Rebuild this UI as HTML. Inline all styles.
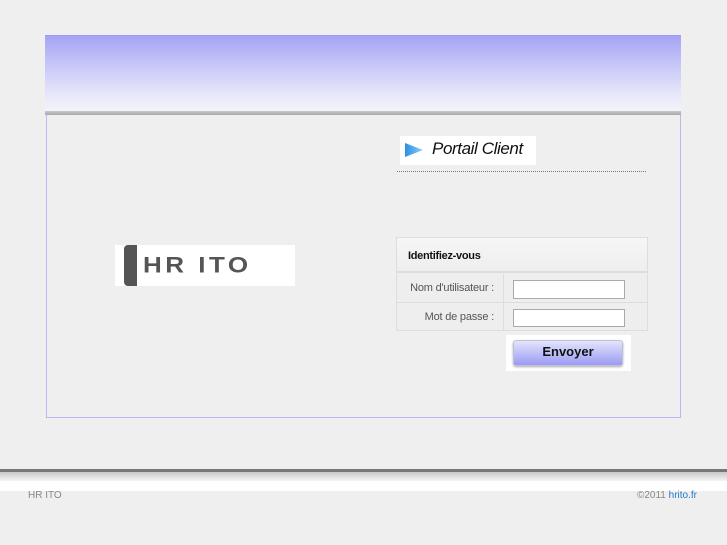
<!DOCTYPE html>
<html><head><meta charset="utf-8"><style>
*{margin:0;padding:0;box-sizing:border-box}
body{width:727px;height:545px;background:#efefef;font-family:"Liberation Sans",sans-serif;position:relative;overflow:hidden}
.a{position:absolute}
</style></head><body>
<div class="a" style="left:45px;top:35px;width:636px;height:78px;background:linear-gradient(#a4a4f4,#c4c4f8 35%,#e6e6fa 75%,#f4f4fb);border-top:1px solid #9c9cf0"></div>
<div class="a" style="left:45px;top:111px;width:636px;height:4px;background:linear-gradient(#c8c8c8,#a8a8a8)"></div>
<div class="a" style="left:46px;top:115px;width:635px;height:303px;border:1px solid #b8b8f2;border-top:none"></div>

<div class="a" style="left:115px;top:245px;width:180px;height:41px;background:#fff"></div>
<div class="a" style="left:124px;top:245px;width:13px;height:41px;background:#555;border-radius:4px 0 0 4px"></div>
<div class="a" style="left:143px;top:252px;font-size:26px;font-weight:bold;color:#555;letter-spacing:3.5px;line-height:30px;transform:scaleY(0.85);transform-origin:top left">HR ITO</div>

<div class="a" style="left:400px;top:136px;width:136px;height:29px;background:#fff"></div>
<svg class="a" style="left:404px;top:142px" width="20" height="16"><defs><linearGradient id="g" x1="0" x2="1"><stop offset="0" stop-color="#2a8fe0"/><stop offset="1" stop-color="#8cd0f8"/></linearGradient></defs><polygon points="1,1 19,8 1,15" fill="url(#g)"/></svg>
<div class="a" style="left:432px;top:139px;font-size:17px;font-style:italic;color:#111;line-height:20px;letter-spacing:-0.4px">Portail Client</div>
<div class="a" style="left:397px;top:171px;width:249px;border-top:1px dotted #777"></div>

<div class="a" style="left:396px;top:237px;width:252px;height:94px;border:1px solid #ddd;background:#eee"></div>
<div class="a" style="left:397px;top:238px;width:250px;height:35px;background:linear-gradient(#f6f6f6,#eee);border-bottom:2px solid #ddd"></div>
<div class="a" style="left:408px;top:250px;font-size:11px;font-weight:bold;color:#111;letter-spacing:-0.3px">Identifiez-vous</div>
<div class="a" style="left:503px;top:274px;width:1px;height:57px;background:#ddd"></div>
<div class="a" style="left:397px;top:302px;width:250px;height:1px;background:#ddd"></div>
<div class="a" style="left:396px;top:282px;width:98px;text-align:right;font-size:11px;color:#555;letter-spacing:-0.2px">Nom d'utilisateur :</div>
<div class="a" style="left:396px;top:311px;width:98px;text-align:right;font-size:11px;color:#555;letter-spacing:-0.2px">Mot de passe :</div>
<div class="a" style="left:513px;top:280px;width:112px;height:19px;background:#fff;border:1px solid #aaa"></div>
<div class="a" style="left:513px;top:309px;width:112px;height:18px;background:#fff;border:1px solid #aaa"></div>

<div class="a" style="left:506px;top:335px;width:125px;height:36px;background:#fff"></div>
<div class="a" style="left:513px;top:340px;width:110px;height:26px;border-radius:3px;background:linear-gradient(#e4e4fc,#9a9af4);border:1px solid #c0c0d8;box-shadow:0 1px 2px #aaa;text-align:center;font-size:13px;font-weight:bold;color:#111;line-height:22px">Envoyer</div>

<div class="a" style="left:0;top:469px;width:727px;height:3px;background:#777"></div>
<div class="a" style="left:0;top:472px;width:727px;height:9px;background:linear-gradient(#c8c8c8,#f4f4f4)"></div>
<div class="a" style="left:0;top:481px;width:727px;height:10px;background:#fff"></div>
<div class="a" style="left:28px;top:490px;font-size:10px;color:#888">HR ITO</div>
<div class="a" style="right:30px;top:490px;font-size:10px;color:#888">©2011 <span style="color:#1a7ad0">hrito.fr</span></div>
</body></html>
